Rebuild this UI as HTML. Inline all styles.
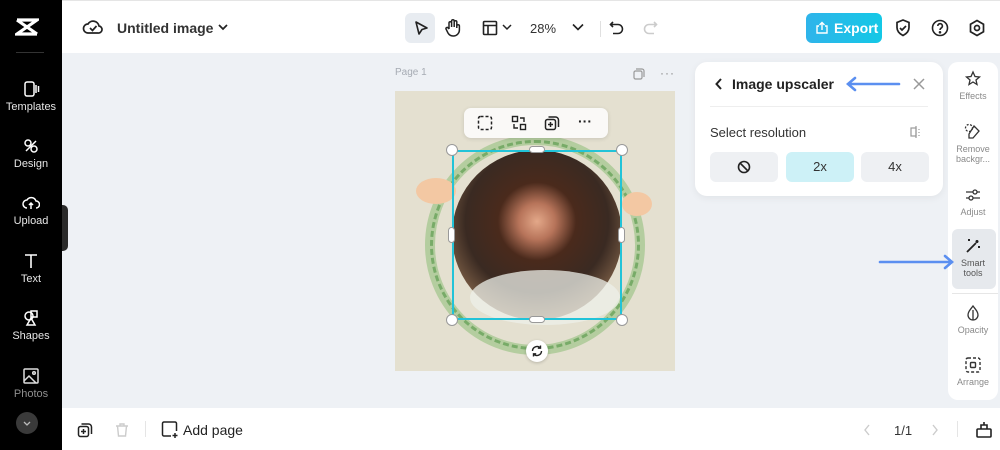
<!DOCTYPE html>
<html><head><meta charset="utf-8"><style>
*{margin:0;padding:0;box-sizing:border-box}
body{width:1000px;height:450px;overflow:hidden;font-family:"Liberation Sans",sans-serif;background:#eef1f5;position:relative;color:#1f1f1f}
.a{position:absolute}
.side{left:0;top:0;width:62px;height:450px;background:#000;color:#fff}
.si{position:absolute;left:0;width:62px;text-align:center;font-size:11px;color:#e6e6e6}
.si svg{display:block;margin:0 auto 3px}
.top{left:62px;top:0;width:938px;height:53px;background:#fff;border-top:1px solid #e5e5e5}
.bot{left:62px;top:408px;width:938px;height:42px;background:#fff}
.rp{left:948px;top:62px;width:50px;height:338px;background:#fff;border-radius:10px}
.ri{position:absolute;left:0;width:50px;text-align:center;font-size:9px;color:#8a8a8a;line-height:10px}
.ri svg{display:block;margin:0 auto 3px}
.btn{position:absolute;top:152px;height:30px;width:68px;border-radius:6px;background:#eef0f3;text-align:center;line-height:30px;font-size:13px;color:#333}
</style></head><body>
<div class="a side">
 <svg class="a" style="left:15px;top:17px" width="24" height="20" viewBox="0 0 24 20"><path d="M2 3h20L2 17h20M2 3l20 14" stroke="#fff" stroke-width="3.2" fill="none"/></svg>
 <div class="a" style="left:16px;top:52px;width:28px;height:1px;background:#333"></div>
 <div class="si" style="top:80px"><svg width="18" height="18" viewBox="0 0 18 18" fill="none" stroke="#fff" stroke-width="1.5"><rect x="3" y="2" width="9" height="14" rx="2"/><path d="M14 5v8M16.5 6v6"/></svg>Templates</div>
 <div class="si" style="top:137px"><svg width="18" height="18" viewBox="0 0 18 18" fill="none" stroke="#fff" stroke-width="1.5"><circle cx="6" cy="6" r="3"/><circle cx="12" cy="12" r="3"/><path d="M4 14l10-10"/></svg>Design</div>
 <div class="si" style="top:194px"><svg width="18" height="18" viewBox="0 0 18 18" fill="none" stroke="#fff" stroke-width="1.5"><path d="M5 14a4 4 0 010-8 5 5 0 019 1 3.5 3.5 0 010 7M9 15V9M7 11l2-2 2 2"/></svg>Upload</div>
 <div class="si" style="top:252px"><svg width="18" height="18" viewBox="0 0 18 18" fill="none" stroke="#fff" stroke-width="1.6"><path d="M3 3h12M9 3v13"/></svg>Text</div>
 <div class="si" style="top:309px"><svg width="18" height="18" viewBox="0 0 18 18" fill="none" stroke="#fff" stroke-width="1.5"><circle cx="7" cy="7" r="4"/><rect x="9" y="2" width="6" height="6"/><path d="M9 9l-4 7h8z"/></svg>Shapes</div>
 <div class="si" style="top:367px;color:#8f8f8f"><svg width="18" height="18" viewBox="0 0 18 18" fill="none" stroke="#ddd" stroke-width="1.5"><rect x="2" y="2" width="14" height="14" rx="1"/><path d="M2 14l5-5 7 7"/><circle cx="12" cy="6" r="1.3"/></svg>Photos</div>
 <div class="a" style="left:16px;top:412px;width:22px;height:22px;border-radius:50%;background:#3a3a3a"><svg width="22" height="22" viewBox="0 0 22 22"><path d="M8 10l3 3 3-3" stroke="#bbb" fill="none" stroke-width="1.3"/></svg></div>
</div>
<div class="a" style="left:62px;top:205px;width:6px;height:46px;background:#2a2a2a;border-radius:0 5px 5px 0"></div>
<div class="a top">
 <svg class="a" style="left:20px;top:17px" width="22" height="18" viewBox="0 0 22 18" fill="none" stroke="#222" stroke-width="1.7"><path d="M6 15a4.5 4.5 0 010-9 6 6 0 0111 2 3.5 3.5 0 01-1 7z"/><path d="M8 10l2.5 2.5L14.5 8"/></svg>
 <div class="a" style="left:55px;top:19px;font-size:14px;font-weight:bold;color:#333">Untitled image</div>
 <svg class="a" style="left:155px;top:21px" width="12" height="10"><path d="M2 3l4 4 4-4" stroke="#222" stroke-width="1.7" fill="none"/></svg>
 <div class="a" style="left:343px;top:12px;width:30px;height:30px;border-radius:6px;background:#e8ecf1"></div>
 <svg class="a" style="left:350px;top:18px" width="18" height="18" viewBox="0 0 18 18"><path d="M4 3l11 6-5 1.5L7 15z" stroke="#222" stroke-width="1.6" fill="none" stroke-linejoin="round"/></svg>
 <svg class="a" style="left:382px;top:17px" width="18" height="20" viewBox="0 0 18 20" fill="none" stroke="#222" stroke-width="1.5"><path d="M5 11V5a1.3 1.3 0 012.6 0V9M7.6 9V3a1.3 1.3 0 012.6 0v6M10.2 9V4a1.3 1.3 0 012.6 0v6M12.8 8a1.3 1.3 0 012.6 0v4a6 6 0 01-6 6H9a6 6 0 01-5-3l-2-4a1.2 1.2 0 012-1.2L5 11"/></svg>
 <svg class="a" style="left:420px;top:19px" width="16" height="16" viewBox="0 0 16 16" fill="none" stroke="#222" stroke-width="1.6"><rect x="1.5" y="1.5" width="13" height="13" rx="1"/><path d="M1.5 5.5h13M6 5.5v9"/></svg>
 <svg class="a" style="left:440px;top:22px" width="10" height="8"><path d="M1 2l4 4 4-4" stroke="#222" stroke-width="1.5" fill="none"/></svg>
 <div class="a" style="left:468px;top:20px;font-size:13px;color:#333">28%</div>
 <svg class="a" style="left:510px;top:22px" width="12" height="8"><path d="M1 1.5l5 5 5-5" stroke="#222" stroke-width="1.6" fill="none"/></svg>
 <div class="a" style="left:538px;top:20px;width:1px;height:16px;background:#e0e0e0"></div>
 <svg class="a" style="left:547px;top:19px" width="16" height="16" viewBox="0 0 16 16" fill="none" stroke="#222" stroke-width="1.6"><path d="M4 2L1.5 4.5 4 7M1.5 4.5H9a4.5 4.5 0 010 9H4"/></svg>
 <svg class="a" style="left:580px;top:19px" width="16" height="16" viewBox="0 0 16 16" fill="none" stroke="#ccc" stroke-width="1.6"><path d="M12 2l2.5 2.5L12 7M14.5 4.5H7a4.5 4.5 0 000 9h5"/></svg>
 <div class="a" style="left:744px;top:12px;width:76px;height:30px;border-radius:6px;background:linear-gradient(90deg,#2fb4ea,#14c8e6);color:#fff;font-size:14px;font-weight:bold;line-height:30px;padding-left:28px">Export</div>
 <svg class="a" style="left:753px;top:20px" width="14" height="14" viewBox="0 0 14 14" fill="none" stroke="#fff" stroke-width="1.4"><path d="M4 5H2v7h10V5h-2M7 9V1.5M4.5 4L7 1.5 9.5 4"/></svg>
 <svg class="a" style="left:832px;top:17px" width="18" height="20" viewBox="0 0 18 20" fill="none" stroke="#222" stroke-width="1.7"><path d="M9 2l6 2.5v5c0 4-3 6.5-6 8-3-1.5-6-4-6-8v-5z"/><path d="M6 10l2 2 4-4"/></svg>
 <svg class="a" style="left:869px;top:18px" width="18" height="18" viewBox="0 0 18 18" fill="none" stroke="#222" stroke-width="1.6"><circle cx="9" cy="9" r="7.5"/><path d="M6.8 7a2.3 2.3 0 114 1.5C10 9.3 9 9.5 9 11"/><circle cx="9" cy="13.3" r=".5" fill="#222"/></svg>
 <svg class="a" style="left:906px;top:18px" width="18" height="18" viewBox="0 0 18 18" fill="none" stroke="#222" stroke-width="1.7"><path d="M9 1.5l6.5 3.75v7.5L9 16.5l-6.5-3.75v-7.5z"/><circle cx="9" cy="9" r="2.5"/></svg>
</div>
<!-- canvas -->
<div class="a" style="left:395px;top:67px;font-size:10px;color:#a6abb3">Page 1</div>
<svg class="a" style="left:632px;top:67px" width="14" height="14" viewBox="0 0 14 14" fill="none" stroke="#999" stroke-width="1.2"><rect x="2" y="4" width="8" height="8" rx="1.5"/><path d="M4 2h6a2 2 0 012 2v6"/></svg>
<div class="a" style="left:660px;top:66px;font-size:12px;color:#888;letter-spacing:1px">···</div>
<div class="a" style="left:395px;top:91px;width:280px;height:280px;background:#e4e0d0"></div>
<div class="a" style="left:425px;top:135px;width:220px;height:220px;border-radius:50%;border:10px solid #8dbe76;opacity:.55"></div>
<div class="a" style="left:430px;top:140px;width:210px;height:210px;border-radius:50%;border:3px dashed #5f9e52;opacity:.7"></div>
<div class="a" style="left:452px;top:150px;width:170px;height:170px;border-radius:50%;background:radial-gradient(circle at 50% 42%,#e3a889 0,#b7745a 14%,#4a2a1c 30%,#3a2a22 55%,#8a6a4e 80%,#c4a888 100%)"></div>
<div class="a" style="left:470px;top:270px;width:150px;height:55px;border-radius:50%;background:#eef0ea;opacity:.75"></div>
<div class="a" style="left:416px;top:178px;width:40px;height:26px;border-radius:50%;background:#f3c8a3"></div>
<div class="a" style="left:622px;top:192px;width:30px;height:24px;border-radius:50%;background:#f3c8a3"></div>
<div class="a" style="left:452px;top:150px;width:170px;height:170px;border:2px solid #22c3d8"></div>
<div class="a" style="left:446px;top:144px;width:12px;height:12px;border-radius:50%;background:#fff;border:1px solid #999"></div>
<div class="a" style="left:616px;top:144px;width:12px;height:12px;border-radius:50%;background:#fff;border:1px solid #999"></div>
<div class="a" style="left:446px;top:314px;width:12px;height:12px;border-radius:50%;background:#fff;border:1px solid #999"></div>
<div class="a" style="left:616px;top:314px;width:12px;height:12px;border-radius:50%;background:#fff;border:1px solid #999"></div>
<div class="a" style="left:529px;top:146px;width:16px;height:7px;border-radius:4px;background:#fff;border:1px solid #999"></div>
<div class="a" style="left:529px;top:316px;width:16px;height:7px;border-radius:4px;background:#fff;border:1px solid #999"></div>
<div class="a" style="left:448px;top:227px;width:7px;height:16px;border-radius:4px;background:#fff;border:1px solid #999"></div>
<div class="a" style="left:618px;top:227px;width:7px;height:16px;border-radius:4px;background:#fff;border:1px solid #999"></div>
<div class="a" style="left:526px;top:340px;width:22px;height:22px;border-radius:50%;background:#fff;box-shadow:0 1px 3px rgba(0,0,0,.2)"><svg width="22" height="22" viewBox="0 0 22 22" fill="none" stroke="#222" stroke-width="1.4"><path d="M6.5 11a4.5 4.5 0 018-2.8M15.5 11a4.5 4.5 0 01-8 2.8M14.5 5.5v2.7h-2.7M7.5 16.5v-2.7h2.7"/></svg></div>
<div class="a" style="left:464px;top:108px;width:144px;height:30px;border-radius:7px;background:#faf9f7;box-shadow:0 1px 4px rgba(0,0,0,.12)">
 <svg class="a" style="left:13px;top:7px" width="16" height="16" viewBox="0 0 16 16" fill="none" stroke="#222" stroke-width="1.5" stroke-dasharray="3 2"><rect x="1.5" y="1.5" width="13" height="13" rx="2"/></svg>
 <svg class="a" style="left:47px;top:7px" width="16" height="16" viewBox="0 0 16 16" fill="none" stroke="#222" stroke-width="1.4"><rect x="1.5" y="1.5" width="5" height="5"/><rect x="9.5" y="9.5" width="5" height="5"/><path d="M9 3h4v4M7 13H3V9"/></svg>
 <svg class="a" style="left:80px;top:7px" width="16" height="16" viewBox="0 0 16 16" fill="none" stroke="#222" stroke-width="1.5"><rect x="1.5" y="4.5" width="10" height="10" rx="2"/><path d="M4.5 2h7a3 3 0 013 3v7M6.5 7v5M4 9.5h5"/></svg>
 <div class="a" style="left:114px;top:5px;font-size:14px;font-weight:bold">···</div>
</div>
<!-- upscaler panel -->
<div class="a" style="left:695px;top:62px;width:248px;height:134px;background:#fff;border-radius:12px;box-shadow:0 2px 8px rgba(0,0,0,.06)"></div>
<svg class="a" style="left:714px;top:77px" width="10" height="14"><path d="M7 2L2.5 7 7 12" stroke="#222" stroke-width="2" fill="none"/></svg>
<div class="a" style="left:732px;top:76px;font-size:14px;font-weight:bold;color:#222">Image upscaler</div>
<svg class="a" style="left:843px;top:76px" width="58" height="16"><path d="M56 8H6M12 2L5 8l7 6" stroke="#5b8ff0" stroke-width="2.6" fill="none" stroke-linecap="round"/></svg>
<svg class="a" style="left:912px;top:77px" width="14" height="14"><path d="M2 2l10 10M12 2L2 12" stroke="#999" stroke-width="1.5"/></svg>
<div class="a" style="left:710px;top:106px;width:218px;height:1px;background:#eee"></div>
<div class="a" style="left:710px;top:125px;font-size:13px;color:#333">Select resolution</div>
<svg class="a" style="left:910px;top:125px" width="12" height="14" viewBox="0 0 12 14" fill="none" stroke="#999" stroke-width="1.2"><rect x="1" y="3" width="5" height="8"/><path d="M6 1v12M9 4v1M9 7v1M9 10v1"/></svg>
<div class="btn" style="left:710px"><svg style="margin-top:8px" width="14" height="14" viewBox="0 0 14 14" fill="none" stroke="#222" stroke-width="1.6"><circle cx="7" cy="7" r="5.5"/><path d="M3 3l8 8"/></svg></div>
<div class="btn" style="left:786px;background:#cdf1f7">2x</div>
<div class="btn" style="left:861px">4x</div>
<!-- right panel -->
<div class="a rp">
 <div class="ri" style="top:8px"><svg width="18" height="18" viewBox="0 0 18 18" fill="none" stroke="#333" stroke-width="1.3"><path d="M9 2l2 4.5 4.5.5-3.5 3 1 4.5L9 12l-4 2.5 1-4.5L2.5 7l4.5-.5z"/></svg>Effects</div>
 <div class="ri" style="top:61px"><svg width="18" height="18" viewBox="0 0 18 18" fill="none" stroke="#333" stroke-width="1.3"><path d="M10 3l5 5-6 7H5v-4z" /><circle cx="5" cy="5" r="3.5" stroke-dasharray="2 1.5"/></svg>Remove<br>backgr...</div>
 <div class="ri" style="top:124px"><svg width="18" height="18" viewBox="0 0 18 18" fill="none" stroke="#333" stroke-width="1.3"><path d="M2 6h14M2 12h14"/><circle cx="11" cy="6" r="2" fill="#fff"/><circle cx="7" cy="12" r="2" fill="#fff"/></svg>Adjust</div>
 <div class="a" style="left:4px;top:167px;width:44px;height:60px;border-radius:6px;background:#e6e9ed"></div>
 <div class="ri" style="top:175px;color:#555"><svg width="18" height="18" viewBox="0 0 18 18" fill="none" stroke="#222" stroke-width="1.8"><path d="M3 15l9-9M13 3v3M11.5 4.5h3M5 2v2M4 3h2M15 9v2M14 10h2"/></svg>Smart<br>tools</div>
 <div class="a" style="left:4px;top:231px;width:46px;height:1px;background:#e6e6e6"></div>
 <div class="ri" style="top:242px"><svg width="18" height="18" viewBox="0 0 18 18" fill="none" stroke="#333" stroke-width="1.3"><path d="M9 2c3 4 5 6 5 9a5 5 0 01-10 0c0-3 2-5 5-9z"/><path d="M9 6v10" /></svg>Opacity</div>
 <div class="ri" style="top:294px"><svg width="18" height="18" viewBox="0 0 18 18" fill="none" stroke="#333" stroke-width="1.4"><rect x="2" y="2" width="14" height="14" rx="2" stroke-dasharray="3 2"/><rect x="6.5" y="6.5" width="5" height="5" rx="1"/></svg>Arrange</div>
</div>
<svg class="a" style="left:878px;top:254px" width="80" height="16"><path d="M2 8h72M67 2l7 6-7 6" stroke="#5b8ff0" stroke-width="2.6" fill="none" stroke-linecap="round"/></svg>
<!-- bottom -->
<div class="a bot">
 <svg class="a" style="left:15px;top:14px" width="16" height="16" viewBox="0 0 16 16" fill="none" stroke="#222" stroke-width="1.5"><rect x="1.5" y="4.5" width="10" height="10" rx="2"/><path d="M4.5 2h7a3 3 0 013 3v7M6.5 7v5M4 9.5h5"/></svg>
 <svg class="a" style="left:52px;top:14px" width="16" height="16" viewBox="0 0 16 16" fill="none" stroke="#ccc" stroke-width="1.4"><path d="M2 4h12M6 4V2h4v2M3.5 4l1 10h7l1-10"/></svg>
 <div class="a" style="left:83px;top:13px;width:1px;height:16px;background:#e5e5e5"></div>
 <svg class="a" style="left:99px;top:13px" width="18" height="18" viewBox="0 0 18 18" fill="none" stroke="#222" stroke-width="1.5"><path d="M10 15H3a1.5 1.5 0 01-1.5-1.5v-11A1.5 1.5 0 013 1h11a1.5 1.5 0 011.5 1.5V10M14 12v5M11.5 14.5h5"/></svg>
 <div class="a" style="left:121px;top:14px;font-size:14px;color:#222">Add page</div>
 <svg class="a" style="left:800px;top:15px" width="10" height="14"><path d="M7 2L3 7l4 5" stroke="#ccc" stroke-width="1.4" fill="none"/></svg>
 <div class="a" style="left:832px;top:15px;font-size:13px;color:#333">1/1</div>
 <svg class="a" style="left:868px;top:15px" width="10" height="14"><path d="M3 2l4 5-4 5" stroke="#ccc" stroke-width="1.4" fill="none"/></svg>
 <div class="a" style="left:895px;top:13px;width:1px;height:16px;background:#e5e5e5"></div>
 <svg class="a" style="left:913px;top:13px" width="18" height="18" viewBox="0 0 18 18" fill="none" stroke="#222" stroke-width="1.6"><rect x="2" y="8" width="14" height="8" rx="1"/><path d="M6 8V4h6v4M9 1v3"/></svg>
</div>
</body></html>
